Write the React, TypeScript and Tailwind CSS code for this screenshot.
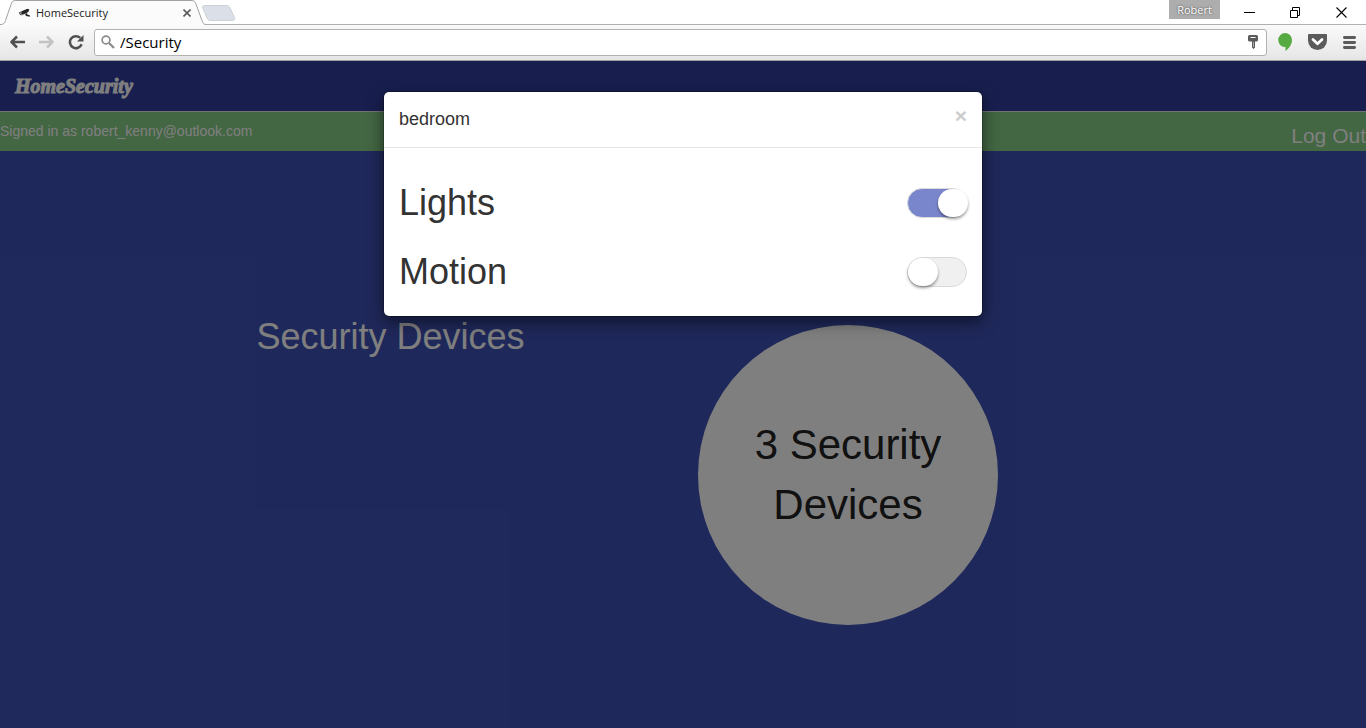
import { useState } from "react";

function BrowserTab() {
  return (
    <div className="relative ml-1 flex h-[25px] w-[198px] items-center">
      <svg className="absolute top-0 -left-1 h-[26px] w-[206px]" viewBox="0 0 206 26" aria-hidden="true">
        <path d="M0 25.5V24.5C4 24.5 4.500 23 5.500 20.500L11 4.500C12 1.500 13 .5 15.500 .5H191C194 .5 195 1.500 196 4L202 20.500C203 23.500 204 24.500 206 24.500V26H0Z" fill="#fbfbfb" />
        <path d="M0 24.500C4 24.500 4.500 23 5.500 20.500L11 4.500C12 1.500 13 .5 15.500 .5H191C194 .5 195 1.500 196 4L202 20.500C203 23.500 204 24.500 206 24.500" fill="none" stroke="#a0a0a0" />
      </svg>
      <div className="relative flex w-full items-center pr-[9px] pl-[14px]">
        <svg className="h-3 w-3" viewBox="0 0 12 12" aria-hidden="true">
          <path d="M3.500 4.300L9.500 1.800L11.300 2.600L10.300 5L5.500 7.400L3 6.500Z" fill="#242424" />
          <path d="M.8 5.300L3 4.600L3.200 6.500L1.300 7Z" fill="#666" />
          <path d="M1.500 7L5 7.400L4.600 8.300L2 8Z" fill="#333" />
          <path d="M7 7L9 6L9.300 7.500L11.800 8.200V9.700L8 9Z" fill="#242424" />
        </svg>
        <span className="ml-[6px] flex-1 text-[11px] leading-4 text-[#222]">HomeSecurity</span>
        <button type="button" aria-label="Close tab" className="flex h-3 w-3 items-center justify-center">
          <svg className="h-2 w-2" viewBox="0 0 8 8" aria-hidden="true">
            <path d="M.5 .5L7.500 7.500M7.500 .5L.5 7.500" stroke="#5a5a5a" strokeWidth="1.600" />
          </svg>
        </button>
      </div>
    </div>
  );
}

function TitleBar() {
  return (
    <div className="flex h-[25px] items-start border-b border-[#b0b0b0] bg-white">
      <BrowserTab />
      <button type="button" aria-label="New tab" className="mt-1 h-[18px] w-9">
        <svg className="h-[18px] w-9" viewBox="0 0 36 18" aria-hidden="true">
          <path d="M3 1.500H24C26 1.500 27 2 28 4L32.500 13.500C33 15.500 32.500 16.500 30 16.500H9C7 16.500 6 16 5 14L.8 4C.3 2.500 1 1.500 3 1.500Z" fill="#dbe0e8" stroke="#ccd1d8" />
        </svg>
      </button>
      <div className="flex-1" />
      <button type="button" className="h-[19px] w-[51px] bg-[#adadad] text-[11px] leading-[18px] text-white [text-shadow:0_0_2px_#333]">
        Robert
      </button>
      <div className="mr-[2px] ml-[6px] flex">
        <button type="button" aria-label="Minimize" className="flex h-6 w-[46px] items-center justify-center">
          <svg className="h-[11px] w-[11px]" viewBox="0 0 11 11" aria-hidden="true">
            <path d="M0 5.500H11" stroke="#000" />
          </svg>
        </button>
        <button type="button" aria-label="Restore" className="flex h-6 w-[46px] items-center justify-center">
          <svg className="h-[11px] w-[11px]" viewBox="0 0 11 11" fill="none" stroke="#000" aria-hidden="true">
            <path d="M.5 3.500H7.500V10.500H.5ZM2.500 3.500V.5H9.500V8.500H7.500" />
          </svg>
        </button>
        <button type="button" aria-label="Close window" className="flex h-6 w-[46px] items-center justify-center">
          <svg className="h-[11px] w-[11px]" viewBox="0 0 11 11" aria-hidden="true">
            <path d="M.5 .5L10.500 10.500M10.500 .5L.5 10.500" stroke="#000" strokeWidth="1.100" />
          </svg>
        </button>
      </div>
    </div>
  );
}

function Toolbar() {
  return (
    <div className="flex h-9 items-center border-b border-[#a0a0a0] bg-linear-to-b from-[#fafafa] to-[#e6e6e6] px-[10px] pb-px">
      <div className="flex gap-[13px]">
        <button type="button" aria-label="Back">
          <svg className="h-4 w-4" viewBox="0 0 16 16" fill="none" stroke="#505050" strokeWidth="2.500" aria-hidden="true">
            <path d="M1.500 8H15M7 2.500L1.500 8L7 13.500" strokeLinejoin="round" />
          </svg>
        </button>
        <button type="button" aria-label="Forward">
          <svg className="h-4 w-4" viewBox="0 0 16 16" fill="none" stroke="#c3c3c3" strokeWidth="2.500" aria-hidden="true">
            <path d="M0 8H13.500M8 2.500L13.500 8L8 13.500" strokeLinejoin="round" />
          </svg>
        </button>
        <button type="button" aria-label="Reload">
          <svg className="h-4 w-4" viewBox="0 0 16 16" aria-hidden="true">
            <path d="M13.600 10.200A6 6 0 1 1 12.200 3.900" fill="none" stroke="#505050" strokeWidth="2.500" />
            <path d="M15.500 1V7.500H9Z" fill="#505050" />
          </svg>
        </button>
      </div>
      <div className="ml-[10px] flex h-[27px] flex-1 items-center rounded-[3px] border border-[#b2b2b2] bg-white pr-2 pl-[6px]">
        <svg className="h-[14px] w-[14px]" viewBox="0 0 14 14" fill="none" stroke="#8c8c8c" aria-hidden="true">
          <circle cx="5" cy="5" r="3.900" strokeWidth="1.700" />
          <path d="M8 8L13 13" strokeWidth="2.300" />
        </svg>
        <input
          aria-label="Address"
          defaultValue="/Security"
          className="ml-[5px] h-6 min-w-0 flex-1 bg-transparent text-[15px] leading-6 text-black outline-none"
        />
        <svg className="h-[14px] w-[10px]" viewBox="0 0 10 14" aria-hidden="true">
          <path d="M1.500 0H8.500Q10 0 10 1.500V5Q10 6.500 8.500 6.500H7V12.500L5.500 14L4 12.500V6.500H1.500Q0 6.500 0 5V1.500Q0 0 1.500 0Z" fill="#5c5c5c" />
          <path d="M2.500 2.500H7.500" stroke="#fff" />
          <path d="M5.500 7V12" stroke="#aaa" />
        </svg>
      </div>
      <div className="ml-[11px] flex items-center">
        <button type="button" aria-label="Hangouts">
          <svg className="h-[18px] w-[14px]" viewBox="0 0 14 18" aria-hidden="true">
            <path d="M7 0A7 7 0 0 1 14 7C14 11.500 11 15.500 7.500 18V14A7 7 0 0 1 7 0Z" fill="#55ab41" />
          </svg>
        </button>
        <button type="button" aria-label="Save to Pocket" className="ml-4">
          <svg className="h-4 w-[19px]" viewBox="0 0 19 16" aria-hidden="true">
            <path d="M1 0H18Q19 0 19 1V6.500A9.500 9.500 0 0 1 0 6.500V1Q0 0 1 0Z" fill="#5b5b5b" />
            <path d="M5 5.500L9.500 9.800L14 5.500" fill="none" stroke="#fff" strokeWidth="2.700" strokeLinecap="round" strokeLinejoin="round" />
          </svg>
        </button>
        <button type="button" aria-label="Menu" className="ml-4">
          <svg className="h-[13px] w-[13px]" viewBox="0 0 13 13" stroke="#5b5b5b" strokeWidth="2.800" strokeLinecap="round" aria-hidden="true">
            <path d="M1.400 1.500H11.600M1.400 6.500H11.600M1.400 11.500H11.600" />
          </svg>
        </button>
      </div>
    </div>
  );
}

function SwitchRow({ id, label, initial }: { id: string; label: string; initial: boolean }) {
  const [on, setOn] = useState(initial);
  return (
    <div className="flex items-center justify-between">
      <label htmlFor={id} className="text-4xl leading-10 text-[#333]">
        {label}
      </label>
      <input
        id={id}
        type="checkbox"
        role="switch"
        checked={on}
        onChange={(e) => setOn(e.target.checked)}
        className="h-[30px] w-[60px] appearance-none rounded-full border border-[#dadada] bg-[#f0f0f0] before:block before:h-7 before:w-[30px] before:rounded-full before:bg-white before:shadow-[0_2px_3px_rgba(0,0,0,0.4)] checked:bg-[#7986cb] checked:before:ml-[30px]"
      />
    </div>
  );
}

function DeviceDialog() {
  return (
    <div className="absolute inset-0 bg-black/50 px-4 pt-[30px]">
      <div
        role="dialog"
        aria-labelledby="dialog-title"
        className="mx-auto max-w-[600px] rounded-md border border-black/20 bg-white bg-clip-padding shadow-[0_5px_15px_rgba(0,0,0,0.5)]"
      >
        <div className="flex h-14 items-start justify-between border-b border-[#e5e5e5] px-[15px] pt-[14px]">
          <h4 id="dialog-title" className="text-lg leading-[26px] text-[#333]">
            bedroom
          </h4>
          <button type="button" aria-label="Close" className="text-[21px] leading-5 font-bold text-[#cccccc]">
            ×
          </button>
        </div>
        <div className="flex flex-col gap-[29px] px-[15px] pt-[35px] pb-6">
          <SwitchRow id="lights" label="Lights" initial={true} />
          <SwitchRow id="motion" label="Motion" initial={false} />
        </div>
      </div>
    </div>
  );
}

export default function App() {
  return (
    <div className="flex min-h-screen flex-col">
      <header className="font-['Open_Sans',sans-serif]">
        <TitleBar />
        <Toolbar />
      </header>
      <div className="relative flex flex-1 flex-col bg-[#3f51b5] font-['Liberation_Sans',Arial,sans-serif] text-white">
        <nav className="flex h-[51px] items-center border-b border-[#e7e7e7] bg-[#303f9f] px-[15px]">
          <a href="#home" className="font-['Liberation_Serif',serif] text-xl leading-5 font-bold italic [-webkit-text-stroke:1px_#fff]">
            HomeSecurity
          </a>
        </nav>
        <div className="flex h-[39px] justify-between bg-[#86cc86]">
          <p className="pt-[9px] text-sm leading-5">Signed in as robert_kenny@outlook.com</p>
          <a href="#logout" className="pt-[9px] text-[21px] leading-[30px]">
            Log Out
          </a>
        </div>
        <main className="mx-auto grid w-full max-w-[1170px] grid-cols-2 pt-[166px] pb-8">
          <h1 className="text-center text-4xl leading-10">Security Devices</h1>
          <div className="px-[15px] pt-2">
            <a
              href="#devices"
              className="flex h-[300px] w-[300px] items-center justify-center rounded-full bg-white px-10 text-center text-[42px] leading-[60px] text-[#222]"
            >
              3 Security Devices
            </a>
          </div>
        </main>
        <DeviceDialog />
      </div>
    </div>
  );
}
